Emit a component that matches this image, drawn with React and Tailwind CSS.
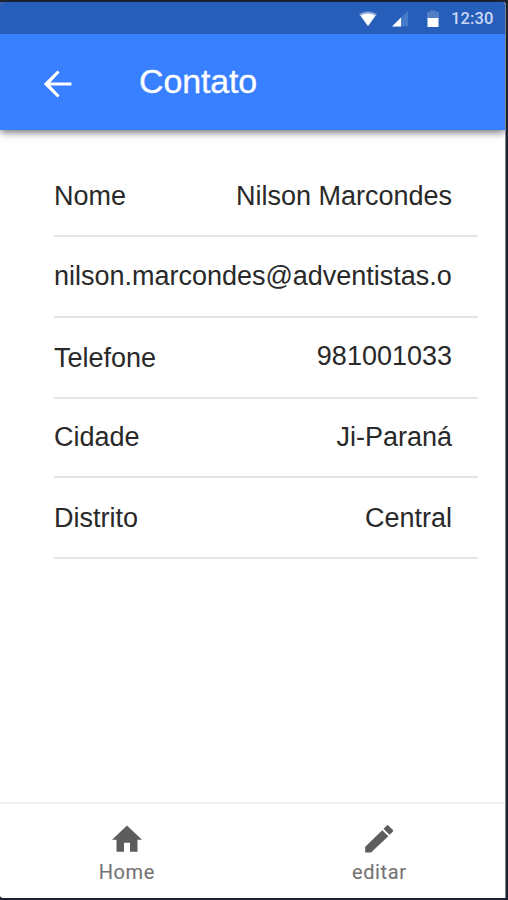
const rows = [
  { label: 'Nome', value: 'Nilson Marcondes', box: 'h-[81px]' },
  { label: '', value: 'nilson.marcondes@adventistas.o', box: 'h-[81px] pb-[2px]', text: 'tracking-[-0.01px]' },
  { label: 'Telefone', value: '981001033', box: 'h-[81px]', text: 'pb-[3px]' },
  { label: 'Cidade', value: 'Ji-Paraná', box: 'h-[79px] pb-[1px]' },
  { label: 'Distrito', value: 'Central', box: 'h-[81px]' },
];

function StatusBar() {
  return (
    <div className="z-20 flex h-8 shrink-0 items-center bg-[#275eb9] pt-[2px] pl-[359px]">
      <svg className="h-4 w-[18px]" viewBox="0 0 18 16">
        <path d="M0 3Q9-2 18 3L9 15Z" fill="#8aa8dc" />
        <path d="M1.5 4.4Q9 0.6 16.5 4.4L9 15Z" fill="#fff" />
      </svg>
      <svg className="ml-[15px] h-4 w-4" viewBox="0 0 16 16">
        <path d="M0 15.5L16 0V15.5Z" fill="#477ac8" />
        <path d="M0 15.5L9 6.5V15.5Z" fill="#fff" />
      </svg>
      <svg className="ml-[19px] h-[18px] w-3" viewBox="0 0 12 18">
        <path d="M0 2H3V0.5H9V2H12V9H0Z" fill="#527fc6" />
        <path d="M0.5 8H11.5V17H0.5Z" fill="#fff" />
      </svg>
      <span className="ml-[12px] font-[Roboto] text-[16.5px] leading-none font-medium tracking-[0.1px] text-[#c9d9f5]">12:30</span>
    </div>
  );
}

function Tab({ label, children, className }) {
  return (
    <button className={`flex flex-col items-center ${className}`}>
      <svg className="h-[36px] w-[36px]" viewBox="0 0 24 24" fill="#5d5d5d">{children}</svg>
      <span className="mt-[3px] font-[Roboto] text-[20px] leading-6 tracking-[0.6px] text-[#737373] [-webkit-text-stroke:0.1px_#737373]">{label}</span>
    </button>
  );
}

export default function App() {
  return (
    <div className="h-[900px] w-[508px] overflow-hidden bg-[#1b2230] pt-[2px] pr-[2px] pb-[2px] font-['Liberation_Sans',sans-serif]">
      <div className="flex h-full flex-col overflow-hidden rounded-t-[3px] rounded-bl-[3px] border-r border-[#7c828c] bg-white">
        <StatusBar />
        <header className="z-10 flex h-24 shrink-0 items-center bg-[#3880ff] pl-[39px] shadow-[0_2px_8px_rgba(0,0,0,0.6)]">
          <svg className="mt-[4px] h-[38px] w-[38px]" viewBox="0 0 24 24" fill="#fff">
            <path d="M20.5 11H7.1l5.9-6.2L11.7 3.4 3 12l8.7 8.6 1.3-1.4L7.1 13h13.4z" />
          </svg>
          <h1 className="ml-[62px] pb-[2px] text-[34px] leading-none tracking-[-0.15px] text-white [-webkit-text-stroke:0.3px_white]">Contato</h1>
        </header>
        <main className="flex-1 pt-[26px] pr-[27px] pl-[54px]">
          {rows.map((row) => (
            <div
              key={row.value}
              className={`flex items-center justify-between border-b-2 border-[#e4e4e4] pr-[26px] text-[27px] leading-8 whitespace-nowrap text-[#292929] ${row.box}`}
            >
              {row.label && <span>{row.label}</span>}
              <span className={row.text}>{row.value}</span>
            </div>
          ))}
        </main>
        <nav className="flex h-[96px] shrink-0 border-t-2 border-[#f0f0f0] pt-[17px]">
          <Tab label="Home" className="w-[254px]">
            <path d="M10 20.5v-6h4v6h5v-8h3L12 3 2 12.5h3v8z" />
          </Tab>
          <Tab label="editar" className="w-[252px]">
            <path d="M2.8 17.2V21h3.9L18.2 10.1l-4-4L2.8 17.2zM21.1 7.3c.4-.4.4-1 0-1.4l-2.7-2.7c-.4-.4-1-.4-1.4 0l-2 2 4 4 2.1-1.9z" />
          </Tab>
        </nav>
      </div>
    </div>
  );
}
